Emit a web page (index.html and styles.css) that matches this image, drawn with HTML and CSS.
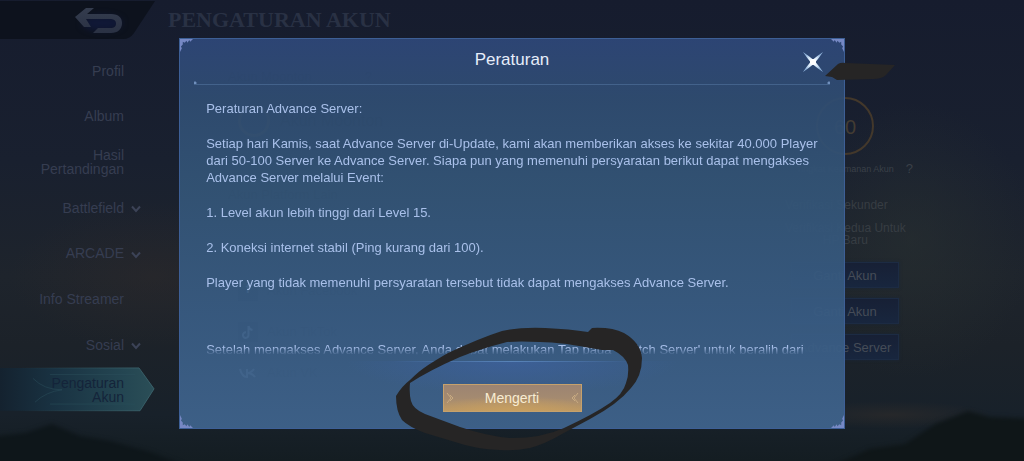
FILE: index.html
```html
<!DOCTYPE html>
<html lang="id">
<head>
<meta charset="utf-8">
<title>Pengaturan Akun</title>
<link rel="stylesheet" href="styles.css">
</head>
<body>
<svg class="scenery" viewBox="0 0 1024 461" preserveAspectRatio="none" aria-hidden="true">
  <defs>
    <filter id="edge" color-interpolation-filters="sRGB"><feGaussianBlur stdDeviation="2"/></filter>
  </defs>
  <g filter="url(#edge)">
    <path d="M-10 437 L25 433 L52 424 L80 436 L110 441 L150 452 L200 471 H-10Z" fill="#0e161a"/>
    <path d="M820 471 L870 449 L905 444 L935 424 L968 411 L990 417 L1034 419 V471Z" fill="#0f1618"/>
  </g>
</svg>

<div class="app">
  <header class="topbar">
    <button class="back" aria-label="Kembali">
      <svg viewBox="0 0 158 39" aria-hidden="true">
        <defs>
          <linearGradient id="arrow" x1="0" y1="0" x2="0" y2="1"><stop offset="0" stop-color="#343c4e"/><stop offset="1" stop-color="#2a3143"/></linearGradient>
          <filter id="glow" x="-50%" y="-50%" width="200%" height="200%" color-interpolation-filters="sRGB"><feGaussianBlur stdDeviation="3"/></filter>
        </defs>
        <path d="M0 0 H155 L134 32 Q130 38 123 38 H0Z" fill="#0d121d"/>
        <ellipse cx="102" cy="22" rx="20" ry="8" fill="#101836" filter="url(#glow)"/>
        <path d="M75 16 L86 7 H94 L87 13 H111 C119 13 122 17 122 22 C122 28 118 32 111 32 H93 L98 27 H110 C115 27 116 25 116 22.500 C116 19 113 18 110 18 H86 L91 26 H84Z" fill="url(#arrow)"/>
      </svg>
    </button>
    <h1>PENGATURAN AKUN</h1>
  </header>

  <div class="content">
    <nav class="menu">
      <a href="#"><span>Profil</span></a>
      <a href="#"><span>Album</span></a>
      <a href="#"><span>Hasil<br>Pertandingan</span></a>
      <a href="#"><span>Battlefield</span><svg viewBox="0 0 10 8"><path d="M1 1.500 L5 6 L9 1.500"/></svg></a>
      <a href="#"><span>ARCADE</span><svg viewBox="0 0 10 8"><path d="M1 1.500 L5 6 L9 1.500"/></svg></a>
      <a href="#"><span>Info Streamer</span></a>
      <a href="#"><span>Sosial</span><svg viewBox="0 0 10 8"><path d="M1 1.500 L5 6 L9 1.500"/></svg></a>
      <a href="#" class="active">
        <svg class="plate" viewBox="0 0 156 48" preserveAspectRatio="none" aria-hidden="true">
          <defs>
            <linearGradient id="plate" x1="0" x2="1"><stop offset="0" stop-color="#14222f"/><stop offset=".35" stop-color="#193242"/><stop offset=".8" stop-color="#244652"/><stop offset="1" stop-color="#2b4e57"/></linearGradient>
            <linearGradient id="trim" gradientUnits="userSpaceOnUse" x1="20" y1="0" x2="154" y2="0"><stop offset="0" stop-color="#31565f" stop-opacity="0"/><stop offset="1" stop-color="#3a626b"/></linearGradient>
          </defs>
          <path d="M0 1 H139 L154 23 L140 46 H0Z" fill="url(#plate)"/>
          <path d="M20 1 H139 L154 23 L140 46 H20" fill="none" stroke="url(#trim)"/>
          <path d="M50 8 H135 M50 39 H135 M33 12 Q44 24 62 24 Q46 26 35 37" fill="none" stroke="#2b505c" stroke-opacity=".5"/>
        </svg>
        <span>Pengaturan<br>Akun</span>
      </a>
    </nav>

    <section class="accounts">
      <h2>Akun Moonton <i>?</i></h2>
      <p class="primary"><b class="ring"></b>Akun Moonton</p>
      <h2>Akun Platform Lain</h2>
      <p><b class="logo">f</b>Akun Facebook</p>
      <p><svg class="logo" viewBox="0 0 20 20"><path d="M10.500 4 V13 A2.800 2.800 0 1 1 8 10.300 M10.500 4 Q11 7.500 14.500 8" fill="none" stroke="#a4b6d0" stroke-width="2"/></svg>Akun TikTok</p>
      <p><svg class="logo plain" viewBox="0 0 20 20"><path d="M2 6 Q4 14 9 14 V6 M9 10 Q13 10 16 6 M9 10 Q14 10 17 14" fill="none" stroke="#8fa0b8" stroke-width="2"/></svg>Akun VK</p>
    </section>

    <section class="security">
      <div class="score">60</div>
      <p class="level">Tingkat Keamanan Akun <i>?</i></p>
      <p class="check">Verifikasi Sekunder</p>
      <p class="check">Verifikasi Kedua Untuk<br>HP Baru</p>
      <button>Ganti Akun</button>
      <button>Ganti Akun</button>
      <button>Advance Server</button>
    </section>
  </div>
</div>

<div class="overlay">
  <div class="dialog" role="dialog" aria-modal="true" aria-labelledby="title">
    <svg class="corner tl" viewBox="0 0 14 14"><path d="M0 0 H14 L11 3 L10 1 L8 4 L7 2 L5 4 L3 3 L3 6 L1 8 L2 10 L0 14Z"/></svg>
    <svg class="corner tr" viewBox="0 0 14 14"><path d="M0 0 H14 L11 3 L10 1 L8 4 L7 2 L5 4 L3 3 L3 6 L1 8 L2 10 L0 14Z"/></svg>
    <svg class="corner bl" viewBox="0 0 14 14"><path d="M0 0 H14 L11 3 L10 1 L8 4 L7 2 L5 4 L3 3 L3 6 L1 8 L2 10 L0 14Z"/></svg>
    <svg class="corner br" viewBox="0 0 14 14"><path d="M0 0 H14 L11 3 L10 1 L8 4 L7 2 L5 4 L3 3 L3 6 L1 8 L2 10 L0 14Z"/></svg>
    <header class="dialog-head">
      <h2 id="title">Peraturan</h2>
      <button class="close" aria-label="Tutup">
        <svg viewBox="0 0 22 22">
          <defs><radialGradient id="star"><stop offset="0" stop-color="#fff"/><stop offset=".5" stop-color="#dcecfb"/><stop offset="1" stop-color="#8fb2da"/></radialGradient></defs>
          <path d="M1 1 Q7 5 11 8.500 Q15 5 21 1 Q17 7 13.500 11 Q17 15 21 21 Q15 17 11 13.500 Q7 17 1 21 Q5 15 8.500 11 Q5 7 1 1Z" fill="url(#star)"/>
          <circle cx="11" cy="11" r="3" fill="#fff"/>
        </svg>
      </button>
    </header>
    <div class="rules">
      <p>Peraturan Advance Server:</p>
      <p>Setiap hari Kamis, saat Advance Server di-Update, kami akan memberikan akses ke sekitar 40.000 Player dari 50-100 Server ke Advance Server. Siapa pun yang memenuhi persyaratan berikut dapat mengakses Advance Server melalui Event:</p>
      <p>1. Level akun lebih tinggi dari Level 15.</p>
      <p>2. Koneksi internet stabil (Ping kurang dari 100).</p>
      <p>Player yang tidak memenuhi persyaratan tersebut tidak dapat mengakses Advance Server.</p>
      <p class="after">Setelah mengakses Advance Server, Anda dapat melakukan Tap pada 'Switch Server' untuk beralih dari</p>
    </div>
    <footer class="dialog-foot">
      <button class="confirm">
        <svg viewBox="0 0 8 16"><path d="M1 3 L5 8 L1 13 M4 5 L7 8 L4 11"/></svg>
        Mengerti
        <svg viewBox="0 0 8 16"><path d="M7 3 L3 8 L7 13 M4 5 L1 8 L4 11"/></svg>
      </button>
    </footer>
  </div>
</div>

<svg class="marker" viewBox="0 0 1024 461" preserveAspectRatio="none" aria-hidden="true">
  <path d="M825 76 L838 64 Q841 62 846 63 L895 65 L886 75 Q882 79 873 79 L837 80 L832 77Z"/>
  <path d="M396 396 Q402 386 410 380 C422 368 434 361 448 353 Q480 338 502 331 Q520 327 545 328 Q570 329 588 332 L592 328 Q612 327 624 333 Q641 343 642 358 Q642 376 631 388 Q618 404 590 419 L562 434 Q545 444 530 448 Q515 451 500 450 Q475 449 455 442 L425 433 Q409 427 402 420 Q396 411 396 396Z
    M410 383 Q409 393 411 401 Q413 409 425 414 L460 427 Q490 437 512 438 Q542 438 564 428 Q594 414 610 403 Q623 394 626 383 Q629 375 628 365 Q625 356 613 350 L602 350 Q580 346 567 344 Q550 342 540 342 Q520 341 507 342 Q480 349 460 357 Q430 370 410 383Z" fill-rule="evenodd"/>
</svg>
</body>
</html>
```
FILE: styles.css
```css
* { box-sizing: border-box; }

body {
  margin: 0;
  min-height: 100vh;
  position: relative;
  overflow: hidden;
  font-family: "Liberation Sans", Arial, sans-serif;
  background:
    radial-gradient(ellipse 14% 16% at 15% 60%, rgba(48, 42, 42, .45), transparent),
    radial-gradient(ellipse 12% 30% at 89% 52%, rgba(44, 52, 50, .45), transparent),
    radial-gradient(ellipse 10% 3% at 87% 90%, rgba(52, 46, 42, .5), transparent),
    linear-gradient(#161c2e 0%, #19202f 35%, #1e242c 60%, #1c2229 75%, #18212a 90%, #141d22 100%);
}

h1, h2, p { margin: 0; font-weight: normal; }

button {
  padding: 0;
  border: 0;
  background: none;
  font: inherit;
}

i { font-style: normal; }

.scenery, .marker {
  position: absolute;
  inset: 0;
  width: 100%;
  height: 100%;
}

.marker {
  fill: #262525;
  pointer-events: none;
}

.app {
  position: relative;
  display: flex;
  flex-direction: column;
  min-height: 100vh;
}

.topbar {
  display: flex;
  align-items: center;
  gap: 10px;
  height: 40px;
}

.back { width: 158px; height: 40px; }
.back svg { display: block; width: 158px; height: 39px; }

h1 {
  font: bold 22px/24px "Liberation Serif", serif;
  color: #293144;
}

.content {
  flex: 1;
  display: grid;
  grid-template-columns: 179px 1fr 200px 79px;
}

.menu {
  display: grid;
  grid-auto-rows: 1fr;
  padding: 8px 0 48px;
}

.menu a {
  position: relative;
  display: grid;
  grid-template-columns: 1fr 10px;
  gap: 7px;
  align-items: center;
  padding-right: 38px;
  font-size: 14px;
  line-height: 14px;
  text-align: right;
  text-decoration: none;
  color: #363d51;
}

.menu a > span { position: relative; }

.menu a > svg:not(.plate) {
  width: 10px;
  height: 8px;
  margin-top: 3px;
  fill: none;
  stroke: #3c4357;
  stroke-width: 2;
}

.menu .active { color: #14243a; }

.plate {
  position: absolute;
  left: 0;
  top: 0;
  width: 156px;
  height: 100%;
}

.accounts {
  padding: 29px 0 0 49px;
  font-size: 13px;
  line-height: 16px;
  color: #05080c;
}

.accounts h2 {
  display: flex;
  gap: 53px;
  font-size: 13px;
}

.accounts p {
  display: flex;
  align-items: center;
  gap: 9px;
  height: 41px;
  padding-left: 10px;
}

.accounts .primary {
  gap: 10px;
  height: 102px;
  padding-bottom: 30px;
  font-size: 16px;
}

.accounts h2 + p:not(.primary) { margin-top: 67px; }

.ring {
  width: 32px;
  height: 32px;
  border: 3px solid #4a3d28;
  border-radius: 50%;
}

.logo {
  width: 20px;
  height: 20px;
  background: #080d14;
  text-align: center;
  color: #a4b6d0;
}

.logo.plain { background: none; }

.security {
  display: flex;
  flex-direction: column;
  align-items: center;
  padding-top: 57px;
  color: #3a4048;
}

.score {
  width: 58px;
  height: 58px;
  border: 2px solid #43382b;
  border-radius: 50%;
  font-size: 20px;
  line-height: 56px;
  text-align: center;
  color: #433c33;
}

.level {
  display: grid;
  grid-template-columns: 1fr auto 1fr;
  gap: 12px;
  width: 100%;
  margin: 6px 0 22px;
  font-size: 9px;
  line-height: 16px;
  white-space: nowrap;
}

.level::before { content: ""; }
.level i { font-size: 13px; }

.check {
  align-self: flex-start;
  margin: 0 0 11px 40px;
  font-size: 12px;
  line-height: 12px;
  color: #373d43;
  text-align: center;
  white-space: nowrap;
}

.security button {
  width: 108px;
  height: 26px;
  margin: 5px 0;
  border: 1px solid #1c2b43;
  background: linear-gradient(#172035, #18263e);
  box-shadow: 0 0 3px #1a2638;
  font-size: 13px;
  color: #454c57;
}

.overlay {
  position: absolute;
  inset: 0;
  display: flex;
  justify-content: center;
  padding: 38px 0 32px;
}

.dialog {
  position: relative;
  display: flex;
  flex-direction: column;
  width: 65%;
  border: 1px solid #3d5f96;
  background: linear-gradient(rgba(46, 71, 120, .94) 0%, rgba(47, 76, 113, .94) 15%, rgba(51, 84, 118, .94) 38%, rgba(56, 91, 130, .94) 70%, rgba(63, 99, 140, .94) 100%);
}

.corner {
  position: absolute;
  width: 13px;
  height: 13px;
  fill: #7688c4;
}

.tl { left: 0; top: 0; }
.tr { right: 0; top: 0; transform: scaleX(-1); }
.bl { left: 0; bottom: 0; transform: scaleY(-1); }
.br { right: 0; bottom: 0; transform: scale(-1); }

.dialog-head {
  display: grid;
  grid-template-columns: 1fr auto 1fr;
  align-items: center;
  margin: 0 14px;
  padding: 2px 0 6px;
  height: 46px;
  background: radial-gradient(circle at 1px 44px, #7090bd 1px, transparent 2px), radial-gradient(circle at calc(100% - 1px) 44px, #7090bd 1px, transparent 2px);
  border-bottom: 1px solid #43628b;
}

.dialog-head h2 {
  grid-column: 2;
  font-size: 17px;
  line-height: 20px;
  color: #e6edfa;
}

.close {
  justify-self: end;
  width: 22px;
  height: 22px;
  margin: 4px 6px 0 0;
}

.close svg { display: block; }

.rules {
  flex: 1;
  min-height: 0;
  overflow: hidden;
  padding: 15px 24px 0 26px;
  font-size: 13px;
  line-height: 17px;
  color: #a9c0ea;
  -webkit-mask-image: linear-gradient(to bottom, #000 calc(100% - 8px), transparent);
  mask-image: linear-gradient(to bottom, #000 calc(100% - 8px), transparent);
}

.rules p { margin-bottom: 18px; }
.rules .after { margin-top: 50px; white-space: nowrap; }

.dialog-foot {
  display: flex;
  justify-content: center;
  margin-top: 6px;
  height: 67px;
  padding-top: 23px;
  background:
    linear-gradient(90deg, transparent 32%, #5883b8 50%, transparent 68%) top / 100% 1px no-repeat,
    radial-gradient(ellipse 25% 50% at 50% 0, rgba(62, 98, 165, .6), transparent);
}

.confirm {
  display: flex;
  align-items: center;
  justify-content: space-between;
  width: 139px;
  height: 28px;
  padding: 0 2px;
  border: 1px solid #c6a16c;
  background: radial-gradient(ellipse 60% 70% at 50% 110%, #c9a05f, transparent), linear-gradient(#9c8472, #a48a70 50%, #bd9964);
  font-size: 14px;
  color: #f8ecd2;
}

.confirm svg {
  width: 8px;
  height: 16px;
  fill: none;
  stroke: #c9ab82;
}
```
